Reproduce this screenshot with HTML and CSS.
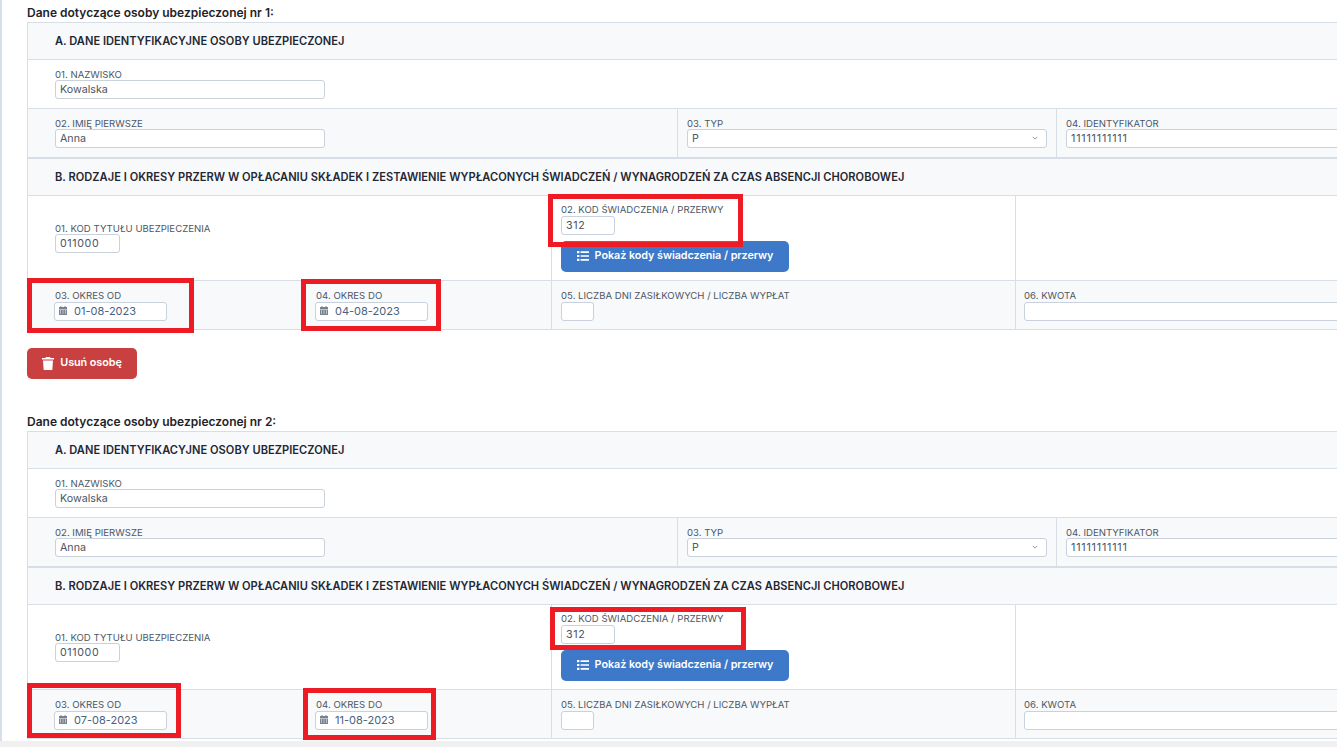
FILE: index.html
```html
<!DOCTYPE html>
<html lang="pl">
<head>
<meta charset="utf-8">
<title>Dane osób ubezpieczonych</title>
<link rel="stylesheet" href="styles.css">
</head>
<body>
<div class="page">
  <div class="content">
    <section class="person">
      <h2 class="person-title">Dane dotyczące osoby ubezpieczonej nr 1:</h2>
      <div class="form-table">
        <div class="head">A. DANE IDENTYFIKACYJNE OSOBY UBEZPIECZONEJ</div>
        <div class="row row-plain">
          <div class="cell first"><label class="lbl">01. NAZWISKO</label><input class="inp w-name" value="Kowalska"></div>
        </div>
        <div class="row row-id alt thick">
          <div class="cell first"><label class="lbl">02. IMIĘ PIERWSZE</label><input class="inp w-name" value="Anna"></div>
          <div class="cell ruled"><label class="lbl">03. TYP</label>
            <div class="sel-wrap"><select class="inp sel"><option>P</option></select><svg class="chev" viewBox="0 0 8 5"><path d="M1 1l3 3 3-3" fill="none" stroke="#6b7686" stroke-width="1"/></svg></div>
          </div>
          <div class="cell ruled"><label class="lbl">04. IDENTYFIKATOR</label><input class="inp w-full num-id" value="11111111111"></div>
        </div>
        <div class="head">B. RODZAJE I OKRESY PRZERW W OPŁACANIU SKŁADEK I ZESTAWIENIE WYPŁACONYCH ŚWIADCZEŃ / WYNAGRODZEŃ ZA CZAS ABSENCJI CHOROBOWEJ</div>
        <div class="row row-code">
          <div class="cell first centered"><label class="lbl">01. KOD TYTUŁU UBEZPIECZENIA</label><input class="inp w-code num" value="011000"></div>
          <div class="cell ruled code-cell"><label class="lbl">02. KOD ŚWIADCZENIA / PRZERWY</label><input class="inp w-kod num" value="312">
            <button class="btn btn-blue" type="button"><svg class="ico-list" viewBox="0 0 12 10"><path d="M0 0h2.4v2.2H0zM0 3.9h2.4v2.2H0zM0 7.8h2.4V10H0zM3.6.3H12v1.6H3.600zM3.6 4.2H12v1.6H3.600zM3.6 8.1H12v1.6H3.600z" fill="#fff"/></svg>Pokaż kody świadczenia / przerwy</button>
          </div>
          <div class="cell ruled"></div>
        </div>
        <div class="row row-period alt">
          <div class="cell first"><label class="lbl">03. OKRES OD</label><div class="date"><svg class="ico-cal" viewBox="0 0 8 9"><path fill-rule="evenodd" d="M1.500 0h1v1h3V0h1v1H8v2H0V1h1.500zM0 3.500h8V9H0zM1 4.500v1h1v-1zM3.500 4.500v1h1v-1zM6 4.500v1h1v-1zM1 6.500v1h1v-1zM3.500 6.500v1h1v-1zM6 6.500v1h1v-1z" fill="#79838f"/></svg><input class="date-inp" value="01-08-2023"></div></div>
          <div class="cell second"><label class="lbl">04. OKRES DO</label><div class="date"><svg class="ico-cal" viewBox="0 0 8 9"><path fill-rule="evenodd" d="M1.500 0h1v1h3V0h1v1H8v2H0V1h1.500zM0 3.500h8V9H0zM1 4.500v1h1v-1zM3.500 4.500v1h1v-1zM6 4.500v1h1v-1zM1 6.500v1h1v-1zM3.500 6.500v1h1v-1zM6 6.500v1h1v-1z" fill="#79838f"/></svg><input class="date-inp" value="04-08-2023"></div></div>
          <div class="cell ruled"><label class="lbl">05. LICZBA DNI ZASIŁKOWYCH / LICZBA WYPŁAT</label><input class="inp w-days" value=""></div>
          <div class="cell ruled last"><label class="lbl">06. KWOTA</label><input class="inp w-full" value=""></div>
        </div>
      </div>
      <button class="btn btn-red" type="button"><svg class="ico-trash" viewBox="0 0 12 13"><path d="M4 0h4l.6 1H12v1.600H0V1h3.400zM1 3.600h10L10.300 13H1.700z" fill="#fff"/></svg>Usuń osobę</button>
    </section>

    <section class="person">
      <h2 class="person-title">Dane dotyczące osoby ubezpieczonej nr 2:</h2>
      <div class="form-table">
        <div class="head">A. DANE IDENTYFIKACYJNE OSOBY UBEZPIECZONEJ</div>
        <div class="row row-plain">
          <div class="cell first"><label class="lbl">01. NAZWISKO</label><input class="inp w-name" value="Kowalska"></div>
        </div>
        <div class="row row-id alt thick">
          <div class="cell first"><label class="lbl">02. IMIĘ PIERWSZE</label><input class="inp w-name" value="Anna"></div>
          <div class="cell ruled"><label class="lbl">03. TYP</label>
            <div class="sel-wrap"><select class="inp sel"><option>P</option></select><svg class="chev" viewBox="0 0 8 5"><path d="M1 1l3 3 3-3" fill="none" stroke="#6b7686" stroke-width="1"/></svg></div>
          </div>
          <div class="cell ruled"><label class="lbl">04. IDENTYFIKATOR</label><input class="inp w-full num-id" value="11111111111"></div>
        </div>
        <div class="head">B. RODZAJE I OKRESY PRZERW W OPŁACANIU SKŁADEK I ZESTAWIENIE WYPŁACONYCH ŚWIADCZEŃ / WYNAGRODZEŃ ZA CZAS ABSENCJI CHOROBOWEJ</div>
        <div class="row row-code">
          <div class="cell first centered"><label class="lbl">01. KOD TYTUŁU UBEZPIECZENIA</label><input class="inp w-code num" value="011000"></div>
          <div class="cell ruled code-cell"><label class="lbl">02. KOD ŚWIADCZENIA / PRZERWY</label><input class="inp w-kod num" value="312">
            <button class="btn btn-blue" type="button"><svg class="ico-list" viewBox="0 0 12 10"><path d="M0 0h2.4v2.2H0zM0 3.9h2.4v2.2H0zM0 7.8h2.4V10H0zM3.6.3H12v1.6H3.600zM3.6 4.2H12v1.6H3.600zM3.6 8.1H12v1.6H3.600z" fill="#fff"/></svg>Pokaż kody świadczenia / przerwy</button>
          </div>
          <div class="cell ruled"></div>
        </div>
        <div class="row row-period alt">
          <div class="cell first"><label class="lbl">03. OKRES OD</label><div class="date"><svg class="ico-cal" viewBox="0 0 8 9"><path fill-rule="evenodd" d="M1.500 0h1v1h3V0h1v1H8v2H0V1h1.500zM0 3.500h8V9H0zM1 4.500v1h1v-1zM3.500 4.500v1h1v-1zM6 4.500v1h1v-1zM1 6.500v1h1v-1zM3.500 6.500v1h1v-1zM6 6.500v1h1v-1z" fill="#79838f"/></svg><input class="date-inp" value="07-08-2023"></div></div>
          <div class="cell second"><label class="lbl">04. OKRES DO</label><div class="date"><svg class="ico-cal" viewBox="0 0 8 9"><path fill-rule="evenodd" d="M1.500 0h1v1h3V0h1v1H8v2H0V1h1.500zM0 3.500h8V9H0zM1 4.500v1h1v-1zM3.500 4.500v1h1v-1zM6 4.500v1h1v-1zM1 6.500v1h1v-1zM3.500 6.500v1h1v-1zM6 6.500v1h1v-1z" fill="#79838f"/></svg><input class="date-inp" value="11-08-2023"></div></div>
          <div class="cell ruled"><label class="lbl">05. LICZBA DNI ZASIŁKOWYCH / LICZBA WYPŁAT</label><input class="inp w-days" value=""></div>
          <div class="cell ruled last"><label class="lbl">06. KWOTA</label><input class="inp w-full" value=""></div>
        </div>
      </div>
    </section>
  </div>
  <div class="hscroll"></div>

  <div class="mark m1"></div>
  <div class="mark m2"></div>
  <div class="mark m3"></div>
  <div class="mark m4"></div>
  <div class="mark m5"></div>
  <div class="mark m6"></div>
</div>
</body>
</html>
```
FILE: styles.css
```css
* { box-sizing: border-box; }
html, body { margin: 0; height: 100%; overflow: hidden; background: #fff; }
body { font-family: Inter, "Liberation Sans", sans-serif; color: #212529; }

.page { position: relative; width: 1337px; height: 747px; overflow: hidden; }
.content { height: 741px; overflow: hidden; padding-left: 25px; border-left: 2px solid #d8dfea; }
.hscroll { height: 6px; background: #f0f0f0; }

.person { height: 409px; }
.person-title { margin: 0; height: 22px; padding-top: 6px; font-size: 12px; line-height: 14px; font-weight: 600; color: #1f2328; white-space: nowrap; }

.form-table { width: 1400px; border: 1px solid #d8dee6; border-bottom: 0; border-right: 0; }

.head { height: 37px; padding-left: 27px; background: #f8f9fb; border-bottom: 1px solid #d8dee6; font-size: 11.1px; line-height: 37px; letter-spacing: .025px; font-weight: 600; color: #1f2733; white-space: nowrap; }

.row { display: grid; border-bottom: 1px solid #d8dee6; background: #fff; }
.alt { background: #f8f9fb; }
.thick { border-bottom-width: 2px; }
.row-plain { height: 49px; }
.row-id { height: 50px; grid-template-columns: 649px 379px 1fr; }
.row-code { height: 85px; grid-template-columns: 523px 464px 1fr; }
.row-period { height: 49px; grid-template-columns: 273px 250px 464px 1fr; }

.cell { display: flex; flex-direction: column; align-items: flex-start; padding: 10px 0 0 9px; min-width: 0; }
.first { padding-left: 27px; }
.second { padding-left: 15px; }
.last { padding-left: 8px; }
.ruled { border-left: 1px solid #d8dee6; }
.centered { justify-content: center; padding-top: 0; }

.lbl { display: block; height: 10px; font-size: 9.6px; line-height: 10px; color: #4d5766; white-space: nowrap; }
.row-period .lbl, .code-cell .lbl { height: 11px; margin-top: -1px; }
.row-period .cell { padding-top: 11px; }

.inp { display: block; height: 19px; padding: 0 4px; border: 1px solid #c8d1dc; border-radius: 3px; background: #fff; font: 400 10.7px/17px Inter, "Liberation Sans", sans-serif; color: #4a5565; outline: 0; }
.num { letter-spacing: .6px; }
.num-id { letter-spacing: .8px; }
.w-name { width: 270px; }
.w-code { width: 65px; }
.w-kod { width: 54px; }
.w-days { width: 33px; }
.w-full { width: 100%; }

.sel-wrap { position: relative; width: 360px; }
.sel { width: 100%; appearance: none; -webkit-appearance: none; }
.chev { position: absolute; right: 9px; top: 7px; width: 6px; height: 4px; }

.date { display: flex; align-items: center; width: 113px; height: 19px; margin-left: -1px; border: 1px solid #c8d1dc; border-radius: 3px; background: #fff; }
.ico-cal { flex: none; width: 8px; height: 9px; margin: -3px 0 0 4px; }
.date-inp { flex: 1; min-width: 0; height: 17px; margin-left: 7px; padding: 0; border: 0; background: transparent; font: 400 11px/17px Inter, "Liberation Sans", sans-serif; color: #4a5f80; outline: 0; }

.btn { display: flex; align-items: center; justify-content: center; height: 31px; padding: 0 0 2px; border: 0; border-radius: 5px; color: #fff; font: 600 10.8px/14px Inter, "Liberation Sans", sans-serif; letter-spacing: -.05px; }
.btn-blue { width: 228px; margin-top: 6px; background: #3d78c9; }
.btn-red { width: 110px; margin-top: 18px; background: #c84040; }
.ico-list { width: 12px; height: 10px; margin-right: 6px; }
.ico-trash { width: 12px; height: 13px; margin: 2px 6px 0 0; }

.mark { position: absolute; border: 5px solid #ed1c24; }
.m1 { left: 548px; top: 194px; width: 195px; height: 53px; }
.m2 { left: 27px; top: 278px; width: 167px; height: 55px; }
.m3 { left: 301px; top: 279px; width: 140px; height: 52px; }
.m4 { left: 550px; top: 607px; width: 196px; height: 43px; }
.m5 { left: 27px; top: 683px; width: 154px; height: 55px; }
.m6 { left: 303px; top: 688px; width: 133px; height: 52px; }
```
